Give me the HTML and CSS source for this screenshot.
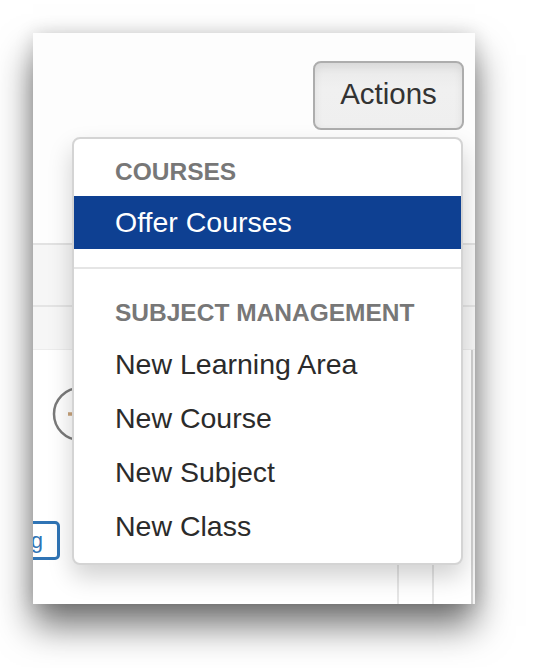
FILE: index.html
```html
<!DOCTYPE html>
<html>
<head>
<meta charset="utf-8">
<link rel="stylesheet" href="styles.css">
</head>
<body>
<div class="window">
  <div class="toolbar">
    <button class="btn-actions">Actions</button>
  </div>
  <div class="thead">
    <div class="thead-row"></div>
    <div class="thead-row"></div>
  </div>
  <div class="tbody">
    <div class="cell main">
      <svg class="add-icon" width="56" height="56" viewBox="0 0 56 56">
        <circle cx="28" cy="28" r="26" fill="#fff" stroke="#7a7a7a" stroke-width="2.5"/>
        <path d="M16 28h24M28 16v24" stroke="#c9a47c" stroke-width="3.5" fill="none"/>
      </svg>
      <span class="tag-btn">Tag</span>
    </div>
    <div class="cell"></div>
    <div class="cell"></div>
    <div class="cell scroll"></div>
  </div>

  <ul class="dropdown">
    <li class="header">COURSES</li>
    <li class="item active">Offer Courses</li>
    <li class="divider"></li>
    <li class="header">SUBJECT MANAGEMENT</li>
    <li class="item">New Learning Area</li>
    <li class="item">New Course</li>
    <li class="item">New Subject</li>
    <li class="item">New Class</li>
  </ul>
</div>
</body>
</html>
```

FILE: styles.css
```css
html, body {
  margin: 0;
  padding: 0;
  background: #ffffff;
}
body {
  padding: 33px 0 64px 33px;
  min-height: 668px;
  box-sizing: border-box;
  font-family: "Liberation Sans", Arial, sans-serif;
}
.window {
  position: relative;
  width: 442px;
  height: 571px;
  background: #ffffff;
  overflow: hidden;
  display: flex;
  flex-direction: column;
  box-shadow: 0 22px 34px rgba(0,0,0,0.55), 0 0 18px rgba(0,0,0,0.14);
}
.toolbar {
  height: 210px;
  flex: none;
  display: flex;
  justify-content: flex-end;
  align-items: flex-start;
  padding: 28px 11px 0 0;
  box-sizing: border-box;
  background: #fdfdfd;
}
.btn-actions {
  width: 151px;
  height: 69px;
  border: 2px solid #adadad;
  border-radius: 8px;
  background: linear-gradient(#e9e9e9, #f0f0f0 40%, #efefef);
  box-shadow: inset 0 4px 8px rgba(0,0,0,0.08);
  font-family: "Liberation Sans", Arial, sans-serif;
  font-size: 29.5px;
  color: #333333;
  padding: 0 0 4px 0;
}
.thead {
  height: 107px;
  flex: none;
  background: #f6f6f6;
  border-top: 2px solid #e2e2e2;
  box-sizing: border-box;
  display: flex;
  flex-direction: column;
}
.thead-row {
  height: 62px;
  border-bottom: 2px solid #e4e4e4;
  box-sizing: border-box;
}
.thead-row + .thead-row {
  height: auto;
  flex: 1;
  border-bottom: 1px solid #ececec;
}
.tbody {
  flex: 1;
  display: grid;
  grid-template-columns: 364px 35px 39px 1fr;
}
.cell {
  border-left: 2px solid #e6e6e6;
}
.cell.main {
  border-left: none;
  display: flex;
  flex-direction: column;
  align-items: flex-start;
}
.cell.scroll {
  background: #f4f4f4;
  border-left: 2px solid #d0d0d0;
}
.add-icon {
  margin: 36px 0 0 19px;
  display: block;
}
.tag-btn {
  margin: 79px 0 0 -32px;
  width: 59px;
  height: 39px;
  box-sizing: border-box;
  border: 3px solid #2f74b5;
  border-radius: 5px;
  color: #2f74b5;
  font-size: 22px;
  display: flex;
  align-items: center;
  justify-content: flex-end;
  padding-right: 14px;
  overflow: hidden;
  white-space: nowrap;
}
.dropdown {
  position: absolute;
  left: 39px;
  top: 104px;
  width: 391px;
  box-sizing: border-box;
  margin: 0;
  padding: 8px 0 10px;
  list-style: none;
  background: #ffffff;
  border: 2px solid #d4d4d4;
  border-radius: 8px;
  box-shadow: 0 12px 24px rgba(0,0,0,0.18);
}
.header {
  height: 49px;
  padding-left: 41px;
  font-size: 24.5px;
  font-weight: bold;
  color: #777777;
  display: flex;
  align-items: center;
}
.item {
  height: 54px;
  padding-left: 41px;
  font-size: 28.5px;
  color: #2b2b2b;
  display: flex;
  align-items: center;
}
.item.active {
  height: 53px;
  background: #0e4092;
  color: #ffffff;
}
.divider {
  height: 2px;
  margin: 18px 0 19px;
  background: #e5e5e5;
}
```
